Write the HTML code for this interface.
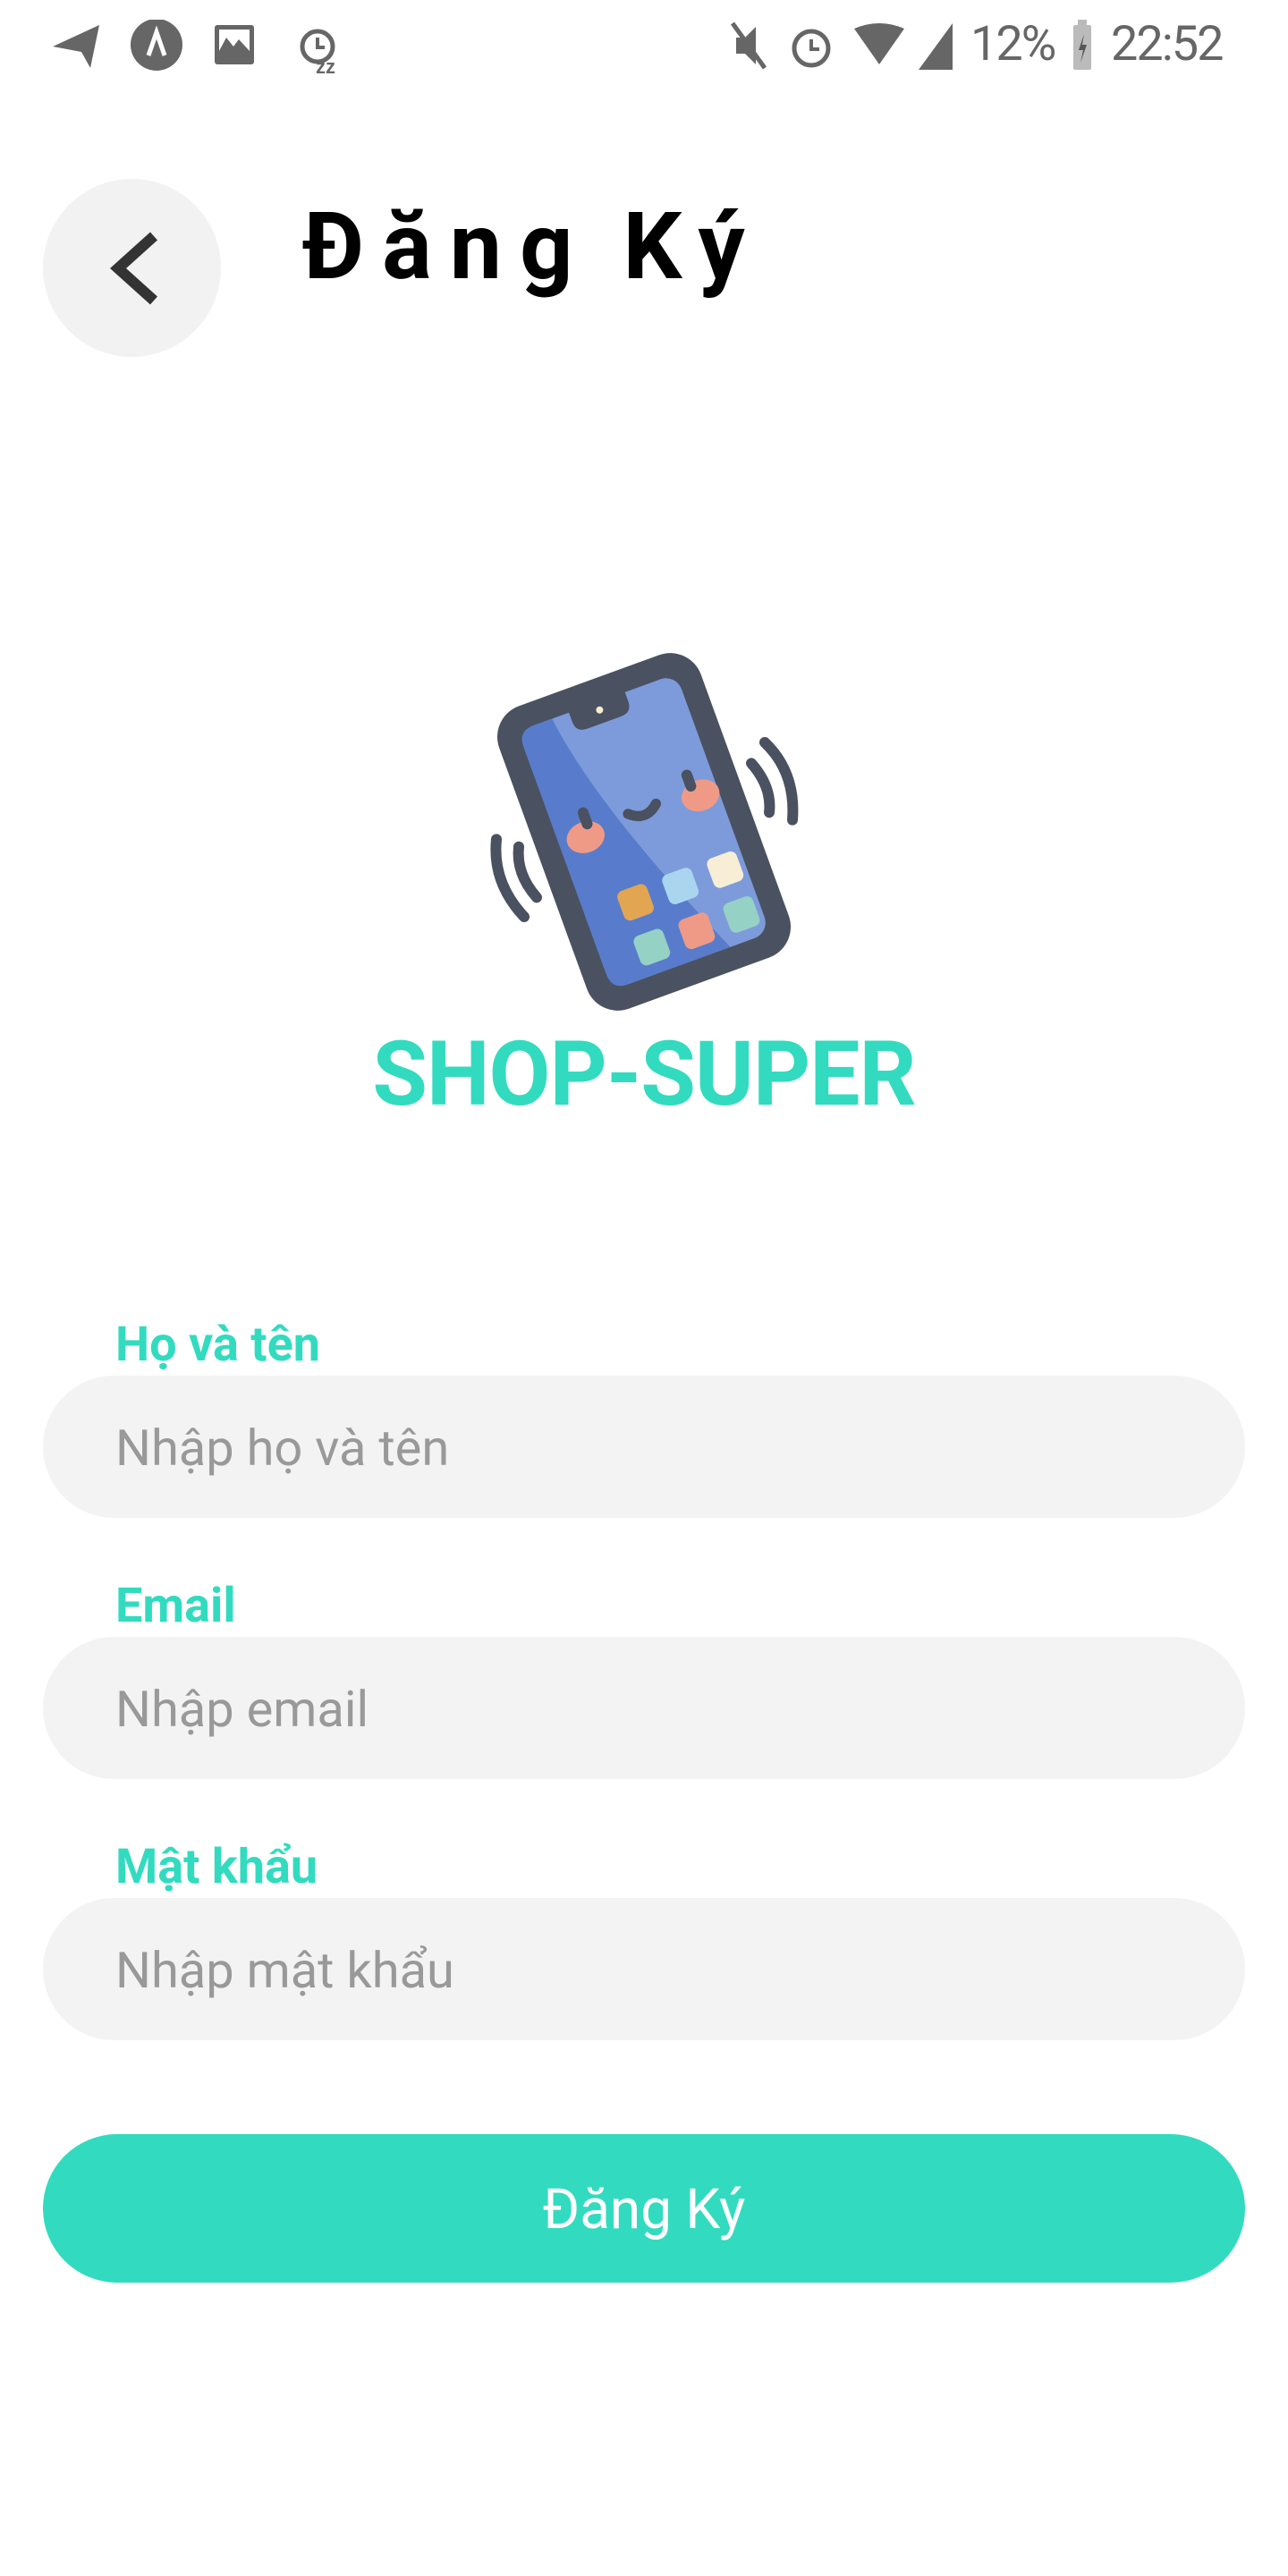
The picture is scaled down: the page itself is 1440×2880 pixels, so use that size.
<!DOCTYPE html>
<html><head><meta charset="utf-8"><style>
*{margin:0;padding:0;box-sizing:border-box}
html,body{width:1440px;height:2880px;background:#fff;overflow:hidden}
body{position:relative;font-family:"Roboto","Liberation Sans","DejaVu Sans",sans-serif}
.abs{position:absolute}
.sb{color:#666;font-size:54px;top:18px;letter-spacing:-2px}
.back{left:48px;top:200px;width:199px;height:199px;border-radius:50%;background:#f2f2f2}
.title{left:338px;top:212px;font-size:104px;font-weight:bold;letter-spacing:20px;word-spacing:-10px;color:#000;line-height:130px}
.brand{left:0;width:1440px;text-align:center;top:1142px;font-size:100px;font-weight:bold;color:#32dbbf;line-height:120px;letter-spacing:-1px}
.lbl{left:129px;font-size:54px;font-weight:bold;color:#32dbbf;line-height:60px}
.inp{left:48px;width:1344px;height:159px;border-radius:80px;background:#f3f3f3;padding-left:81px;font-size:56px;color:#999;line-height:162px}
.btn{left:48px;top:2386px;width:1344px;height:166px;border-radius:83px;background:#32dbbf;color:#fff;font-size:62px;text-align:center;line-height:170px}
</style></head><body>
<svg class="abs" style="left:55px;top:22px" width="360" height="60" viewBox="0 0 360 60">
<path d="M4 30 L56 6 L46 54 L36 36 Z" fill="#666"/>
<circle cx="120" cy="28" r="29" fill="#666"/><path d="M111 40 L120 14 L129 40" stroke="#fff" stroke-width="5" fill="none"/>
<rect x="185" y="6" width="44" height="44" rx="3" fill="#666"/><rect x="190" y="11" width="34" height="24" fill="#fff"/><path d="M190 35 L198 20 L206 30 L212 22 L224 35Z" fill="#666"/>
<circle cx="300" cy="30" r="17" stroke="#666" stroke-width="5" fill="none"/><path d="M300 20 V31 H308" stroke="#666" stroke-width="4" fill="none"/><text x="298" y="60" font-size="22" fill="#666" font-family="Liberation Sans" font-weight="bold">zz</text>
</svg>
<svg class="abs" style="left:815px;top:22px" width="250" height="60" viewBox="0 0 250 60">
<path d="M8 20 H18 L30 8 V50 L18 38 H8Z" fill="#666"/><path d="M4 4 L40 54" stroke="#666" stroke-width="5"/>
<circle cx="92" cy="32" r="19" stroke="#666" stroke-width="5" fill="none"/><path d="M92 22 V33 H101" stroke="#666" stroke-width="4" fill="none"/>
<path d="M140 10 Q168 -2 196 10 L168 50Z" fill="#666"/>
<path d="M212 56 L250 4 V56Z" fill="#666"/>
</svg>
<div class="abs sb" style="left:1085px">12%</div>
<svg class="abs" style="left:1198px;top:22px" width="24" height="58"><rect x="2" y="6" width="20" height="50" rx="2" fill="#bbb"/><rect x="7" y="0" width="10" height="8" fill="#bbb"/><path d="M14 16 L8 34 H13 L10 48 L17 28 H12Z" fill="#555"/></svg>
<div class="abs sb" style="left:1242px">22:52</div>

<div class="abs back"></div>
<svg class="abs" style="left:110px;top:250px" width="80" height="100"><path d="M62 14 L22 50 L62 86" stroke="#333" stroke-width="12" fill="none"/></svg>
<div class="abs title">Đăng Ký</div>

<svg class="abs" style="left:500px;top:700px" width="420" height="460" viewBox="0 0 1260 1380">
<g stroke="#4a5160" stroke-width="36" stroke-linecap="round" fill="none">
<path d="M1065 390 Q1170 490 1158 650"/><path d="M1020 460 Q1090 540 1080 625"/>
<path d="M165 715 Q150 860 258 975"/><path d="M240 740 Q230 830 300 910"/>
</g>
<g transform="rotate(-20 660 690)">
<rect x="300" y="150" width="720" height="1080" rx="110" fill="#4a5160"/>
<rect x="378" y="228" width="564" height="924" rx="55" fill="#7d9bdb"/>
<path d="M433 228 H500 Q540 560 800 1152 H433 Q378 1152 378 1097 V283 Q378 228 433 228Z" fill="#587ccb"/>
<path d="M560 220 H760 V260 Q760 300 720 300 H600 Q560 300 560 260Z" fill="#4a5160"/>
<circle cx="660" cy="255" r="12" fill="#f6ecd0"/>
<ellipse cx="470" cy="640" rx="65" ry="52" fill="#ef9a87"/>
<ellipse cx="880" cy="640" rx="65" ry="52" fill="#ef9a87"/>
<path d="M490 560 V600" stroke="#4a5160" stroke-width="36" stroke-linecap="round"/>
<path d="M860 560 V600" stroke="#4a5160" stroke-width="36" stroke-linecap="round"/>
<path d="M630 615 Q680 660 730 615" stroke="#4a5160" stroke-width="34" stroke-linecap="round" fill="none"/>
<rect x="500" y="850" width="105" height="105" rx="22" fill="#e2a552"/>
<rect x="660" y="850" width="105" height="105" rx="22" fill="#abd5ef"/>
<rect x="820" y="850" width="105" height="105" rx="22" fill="#f8eed5"/>
<rect x="500" y="1010" width="105" height="105" rx="22" fill="#96d1c5"/>
<rect x="660" y="1010" width="105" height="105" rx="22" fill="#ef9a87"/>
<rect x="820" y="1010" width="105" height="105" rx="22" fill="#96d1c5"/>
</g>
</svg>
<div class="abs brand">SHOP-SUPER</div>

<div class="abs lbl" style="top:1474px">Họ và tên</div>
<div class="abs inp" style="top:1538px">Nhập họ và tên</div>
<div class="abs lbl" style="top:1766px">Email</div>
<div class="abs inp" style="top:1830px">Nhập email</div>
<div class="abs lbl" style="top:2058px">Mật khẩu</div>
<div class="abs inp" style="top:2122px">Nhập mật khẩu</div>
<div class="abs btn">Đăng Ký</div>
</body></html>
